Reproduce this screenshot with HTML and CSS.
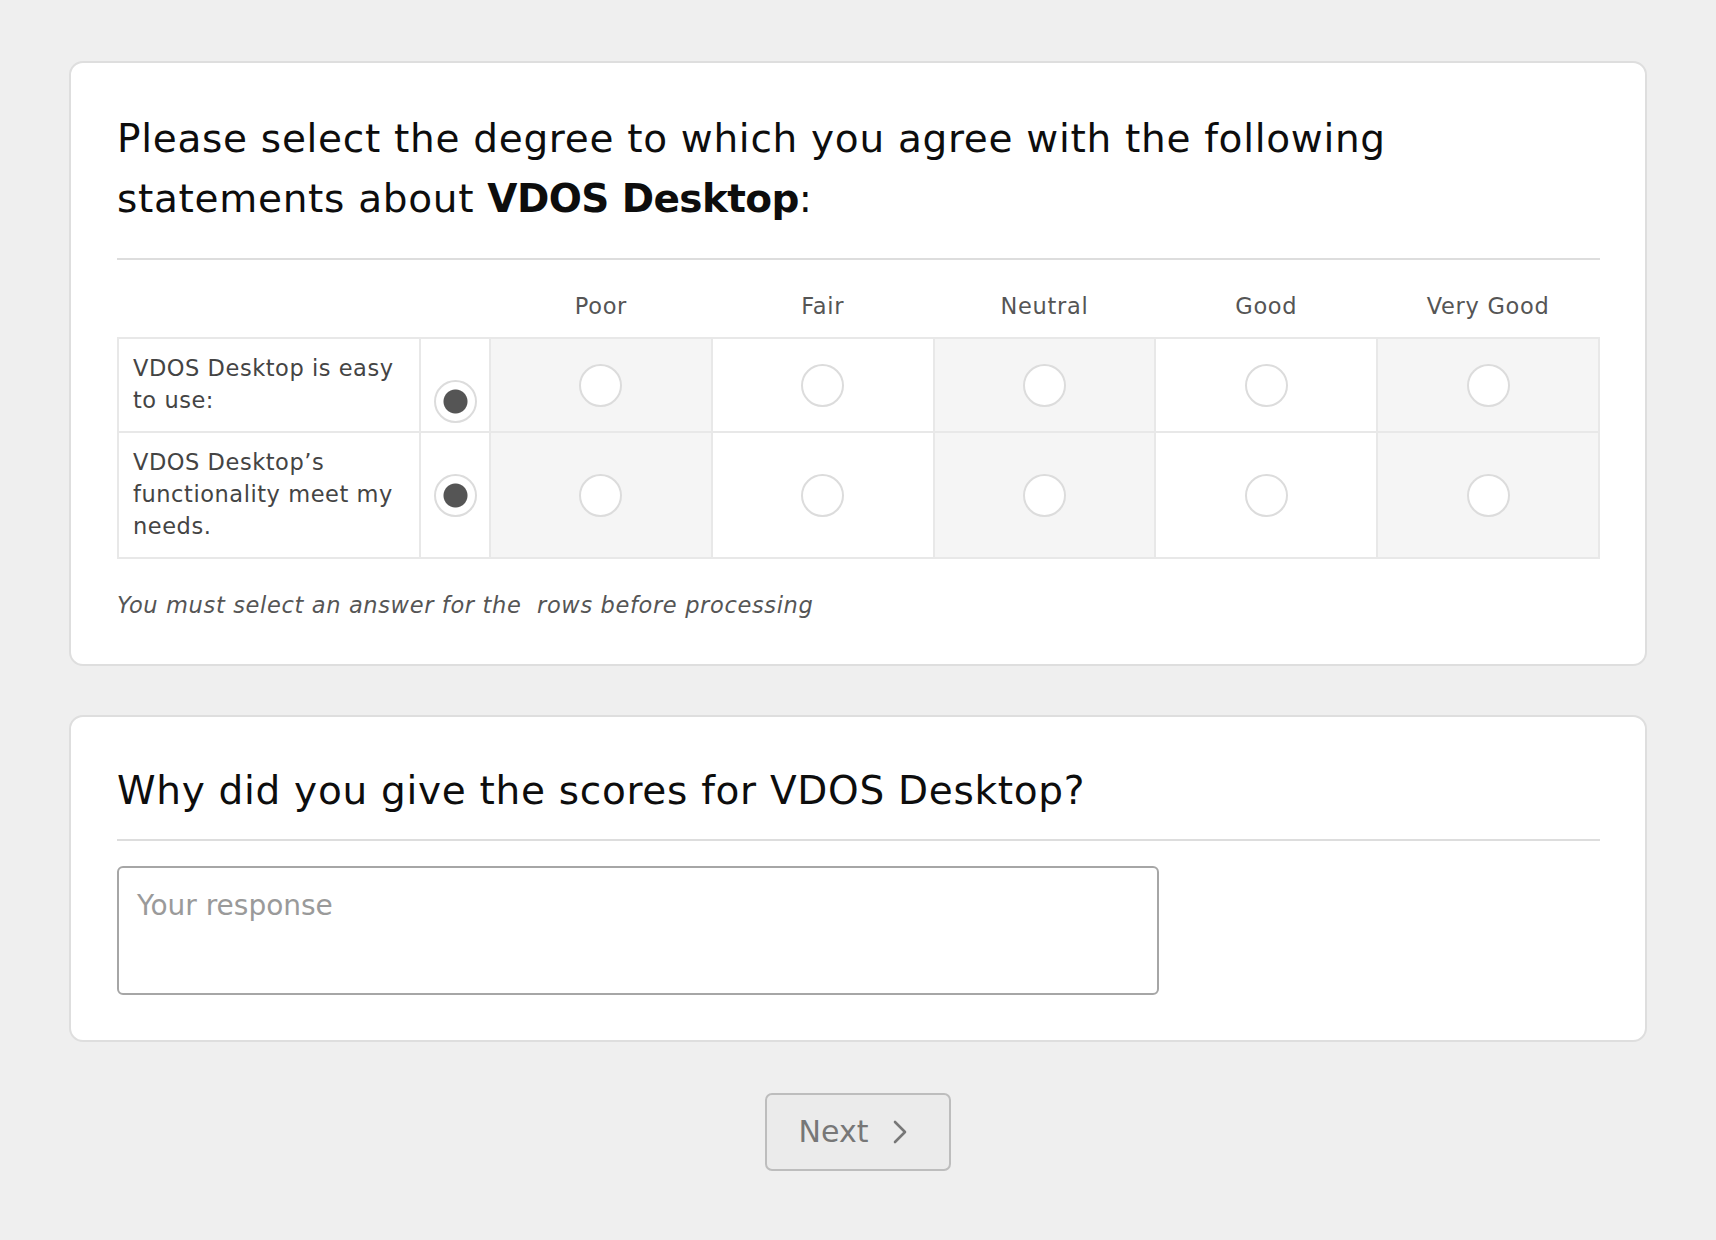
FILE: index.html
```html
<!DOCTYPE html>
<html lang="en">
<head>
<meta charset="utf-8">
<title>Survey</title>
<link rel="stylesheet" href="styles.css">
</head>
<body>
<main class="survey">
  <section class="card card--matrix">
    <h2 class="question"><span>Please select the degree to which you agree with the following</span><br><span>statements about </span><strong>VDOS Desktop</strong><span>:</span></h2>
    <hr class="divider divider--matrix">
    <table class="matrix">
      <colgroup>
        <col class="col-label">
        <col class="col-answer">
        <col><col><col><col><col>
      </colgroup>
      <thead>
        <tr>
          <th></th><th></th>
          <th>Poor</th><th>Fair</th><th>Neutral</th><th>Good</th><th>Very Good</th>
        </tr>
      </thead>
      <tbody>
        <tr class="row row--short">
          <td class="label">VDOS Desktop is easy to use:</td>
          <td class="answer"><input type="radio" name="q1" class="radio radio--low" checked></td>
          <td class="opt opt--shade"><input type="radio" name="q1" class="radio"></td>
          <td class="opt"><input type="radio" name="q1" class="radio"></td>
          <td class="opt opt--shade"><input type="radio" name="q1" class="radio"></td>
          <td class="opt"><input type="radio" name="q1" class="radio"></td>
          <td class="opt opt--shade"><input type="radio" name="q1" class="radio"></td>
        </tr>
        <tr class="row">
          <td class="label">VDOS Desktop’s functionality meet my needs.</td>
          <td class="answer"><input type="radio" name="q2" class="radio" checked></td>
          <td class="opt opt--shade"><input type="radio" name="q2" class="radio"></td>
          <td class="opt"><input type="radio" name="q2" class="radio"></td>
          <td class="opt opt--shade"><input type="radio" name="q2" class="radio"></td>
          <td class="opt"><input type="radio" name="q2" class="radio"></td>
          <td class="opt opt--shade"><input type="radio" name="q2" class="radio"></td>
        </tr>
      </tbody>
    </table>
    <p class="note">You must select an answer for the&nbsp; rows before processing</p>
  </section>

  <section class="card card--text">
    <h2 class="question">Why did you give the scores for VDOS Desktop?</h2>
    <hr class="divider divider--text">
    <textarea class="response" placeholder="Your response"></textarea>
  </section>

  <div class="actions">
    <button class="next" type="button">
      <span class="next__label">Next</span>
      <svg class="next__icon" width="14" height="24" viewBox="0 0 14 24" aria-hidden="true">
        <path d="M2 2 L12 12 L2 22" fill="none" stroke="#777" stroke-width="2.6" stroke-linecap="round" stroke-linejoin="round"/>
      </svg>
    </button>
  </div>
</main>
</body>
</html>
```

FILE: styles.css
```css
* {
  box-sizing: border-box;
}

html, body {
  margin: 0;
  padding: 0;
}

body {
  background: #efefef;
  font-family: "DejaVu Sans", "Noto Sans", sans-serif;
  color: #111;
}

.survey {
  width: 1578px;
  margin: 0 auto;
  padding: 61px 0 60px;
}

.card {
  background: #fff;
  border: 2px solid #dedede;
  border-radius: 14px;
  padding: 44px 45px 45px 46px;
}

.card--matrix {
  padding-top: 46px;
  padding-bottom: 44px;
}

.card--text {
  margin-top: 49px;
}

.question {
  margin: 0;
  font-size: 39px;
  line-height: 60px;
  font-weight: normal;
  letter-spacing: 0.7px;
  color: #0d0d0d;
}

.question strong {
  font-weight: bold;
  letter-spacing: -0.6px;
}

.divider {
  border: 0;
  height: 2px;
  background: #dddddd;
  margin: 0;
}

.divider--matrix {
  margin-top: 29px;
}

.divider--text {
  margin-top: 18px;
  margin-bottom: 25px;
}

.matrix {
  width: 100%;
  table-layout: fixed;
  border-collapse: collapse;
}

.col-label {
  width: 302px;
}

.col-answer {
  width: 70px;
}

.matrix th {
  font-weight: normal;
  font-size: 22.5px;
  line-height: 30px;
  letter-spacing: 0.7px;
  color: #555;
  padding: 31px 0 16px;
  text-align: center;
}

.matrix td {
  border: 2px solid #e8e8e8;
  padding: 0;
  text-align: center;
  vertical-align: middle;
}

.matrix td.label {
  text-align: left;
  vertical-align: top;
  padding: 13px 10px 15px 14px;
  font-size: 22.5px;
  line-height: 32px;
  letter-spacing: 0.55px;
  color: #444;
}

.opt--shade {
  background: #f5f5f5;
}

.radio {
  -webkit-appearance: none;
  appearance: none;
  display: block;
  margin: 0 auto;
  width: 43px;
  height: 43px;
  border: 2px solid #dcdcdc;
  border-radius: 50%;
  background: #fff;
}

.radio:checked {
  background: radial-gradient(circle, #555 0, #555 11.5px, #fff 12.5px);
}

.radio--low {
  margin-top: 32px;
}

.note {
  margin: 31px 0 0;
  font-size: 22.5px;
  line-height: 30px;
  font-style: italic;
  letter-spacing: 0.65px;
  color: #555;
}

.response {
  display: block;
  width: 1042px;
  height: 129px;
  border: 2px solid #a6a6a6;
  border-radius: 6px;
  padding: 20px 18px;
  font-family: "DejaVu Sans", "Noto Sans", sans-serif;
  font-size: 28px;
  line-height: 36px;
  resize: none;
  color: #333;
  background: #fff;
}

.response::placeholder {
  color: #9a9a9a;
}

.actions {
  display: flex;
  justify-content: center;
  margin-top: 51px;
}

.next {
  display: flex;
  align-items: center;
  gap: 25px;
  height: 78px;
  padding: 0 42px 0 32px;
  background: #ebebeb;
  border: 2px solid #bdbdbd;
  border-radius: 7px;
  font-family: "DejaVu Sans", "Noto Sans", sans-serif;
  font-size: 30px;
  color: #777;
  cursor: pointer;
}

.next__label {
  line-height: 36px;
}

.next__icon {
  display: block;
}
```
